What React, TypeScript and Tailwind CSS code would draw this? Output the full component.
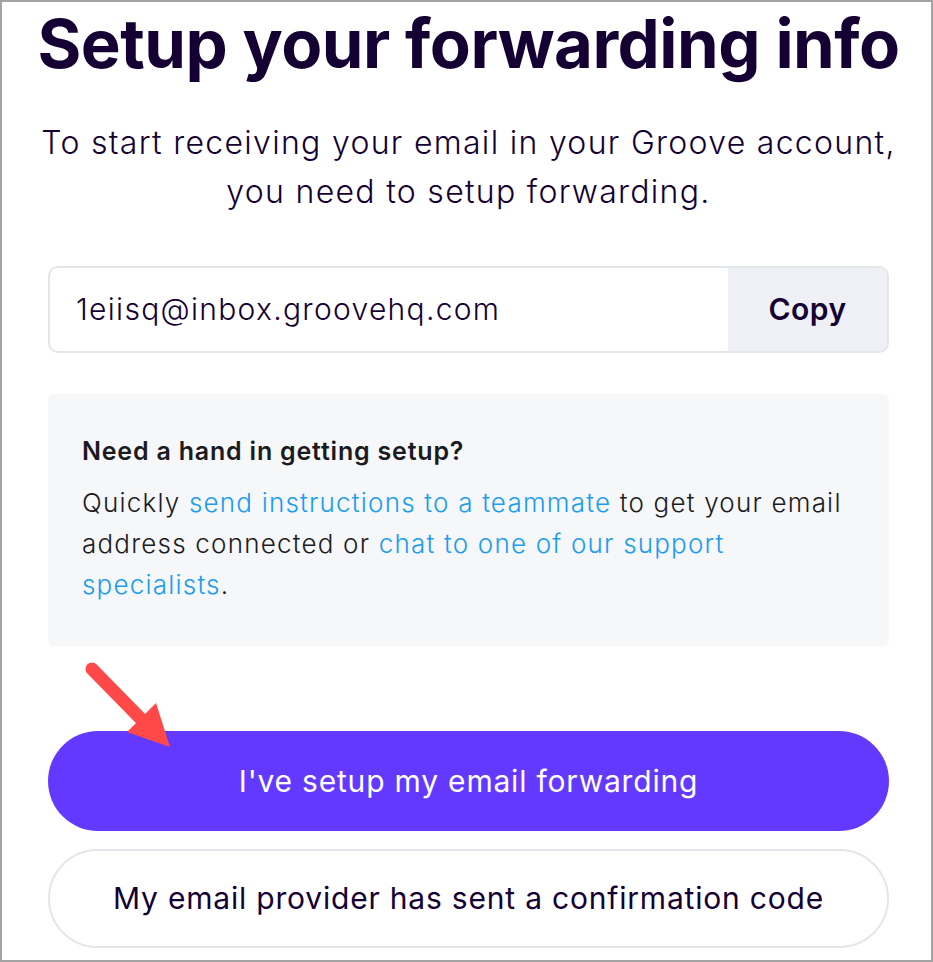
import React from "react";

const Arrow = () => (
  <svg
    className="absolute left-0 top-0 pointer-events-none"
    width="200"
    height="760"
    viewBox="0 0 200 760"
  >
    <line
      x1="90"
      y1="667"
      x2="138"
      y2="716"
      stroke="#ff4848"
      strokeWidth="13"
      strokeLinecap="round"
    />
    <polygon points="154,701 125,730 168,745" fill="#ff4848" />
  </svg>
);

export default function App() {
  return (
    <div className="relative w-[933px] h-[962px] bg-white border-2 border-[#a3a3a3] overflow-hidden font-['Inter',sans-serif]">
      <div className="flex flex-col pl-[46px] pr-[42px]">
        <h1 className="-mx-[40px] mt-[2px] whitespace-nowrap text-center text-[67px] leading-[80px] font-bold tracking-[-0.5px] text-[#140033]">
          Setup your forwarding info
        </h1>

        <p className="-mx-[30px] mt-[34px] whitespace-nowrap text-center text-[32px] leading-[49px] font-light tracking-[1.3px] text-[#140033]">
          To start receiving your email in your Groove account,
          <br />
          you need to setup forwarding.
        </p>

        <div className="mt-[50px] flex h-[87px] rounded-[10px] border-2 border-[#e3e6eb] overflow-hidden">
          <div className="flex-1 flex items-center pl-[26px] text-[30px] font-light tracking-[1.3px] text-[#140033]">
            1eiisq@inbox.groovehq.com
          </div>
          <div className="w-[159px] flex items-center justify-center bg-[#eef0f5] text-[30px] font-semibold tracking-[0.5px] text-[#140033]">
            Copy
          </div>
        </div>

        <div className="mt-[41px] h-[252px] rounded-[6px] bg-[#f6f7f9] pl-[34px] pr-[16px] pt-[40px]">
          <div className="text-[25px] leading-[34px] font-semibold tracking-[0.8px] text-[#1b1b1f]">
            Need a hand in getting setup?
          </div>
          <p className="mt-[14px] text-[26px] leading-[41px] font-light tracking-[1.2px] text-[#1b1b1f]">
            Quickly{" "}
            <a className="text-[#1a9cf0]">send instructions to a teammate</a> to
            get your email
            <br />
            address connected or{" "}
            <a className="text-[#1a9cf0]">
              chat to one of our support
              <br />
              specialists
            </a>
            .
          </p>
        </div>

        <button className="mt-[85px] h-[100px] rounded-full bg-[#6439ff] text-white text-[30px] font-normal tracking-[0.8px]">
          I've setup my email forwarding
        </button>

        <button className="mt-[18px] h-[99px] rounded-full border-2 border-[#e4e6eb] bg-white text-[#140033] text-[30px] font-normal tracking-[0.8px]">
          My email provider has sent a confirmation code
        </button>
      </div>
      <Arrow />
    </div>
  );
}
